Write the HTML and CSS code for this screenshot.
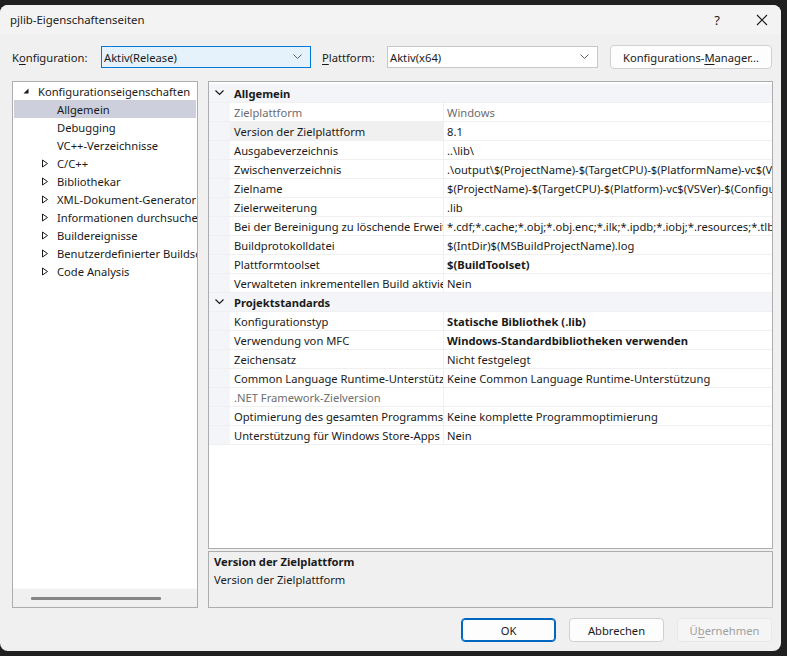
FILE: index.html
```html
<!DOCTYPE html>
<html lang="de">
<head>
  <meta charset="UTF-8">
  <title>pjlib-Eigenschaftenseiten</title>
  <link rel="stylesheet" href="styles.css">
</head>
<body>

<div class="window">
  <div class="titlebar">
    <span class="title">pjlib-Eigenschaftenseiten</span>
    <span class="tb-help">?</span>
    <svg class="tb-close" width="12" height="12" viewBox="0 0 12 12"><path d="M1 1L11 11M11 1L1 11" stroke="#1a1a1a" stroke-width="1.1" fill="none"/></svg>
  </div>

  <div class="content">
    <div class="toolbar">
      <label class="lbl">K<u>o</u>nfiguration:</label>
      <div class="combo active">
        <span>Aktiv(Release)</span>
        <svg width="9" height="6" viewBox="0 0 9 6"><path d="M0.5 0.5L4.5 4.5L8.5 0.5" stroke="#606060" fill="none"/></svg>
      </div>
      <label class="lbl lbl2"><u>P</u>lattform:</label>
      <div class="combo">
        <span>Aktiv(x64)</span>
        <svg width="9" height="6" viewBox="0 0 9 6"><path d="M0.5 0.5L4.5 4.5L8.5 0.5" stroke="#606060" fill="none"/></svg>
      </div>
      <button class="btn mgr">Konfigurations-<u>M</u>anager...</button>
    </div>

    <div class="main">
      <div class="tree">
        <div class="tree-items">
          <div class="node root">
            <svg class="tw" width="8" height="8" viewBox="0 0 8 8"><path d="M6.5 1.5L6.5 6.5L1.5 6.5Z" fill="#1a1a1a"/></svg>
            <span>Konfigurationseigenschaften</span>
          </div>
          <div class="node leaf selected"><span>Allgemein</span></div>
          <div class="node leaf"><span>Debugging</span></div>
          <div class="node leaf"><span>VC++-Verzeichnisse</span></div>
          <div class="node"><svg class="tw" width="8" height="9" viewBox="0 0 8 9"><path d="M1.5 1L6.5 4.5L1.5 8Z" stroke="#1a1a1a" fill="none"/></svg><span>C/C++</span></div>
          <div class="node"><svg class="tw" width="8" height="9" viewBox="0 0 8 9"><path d="M1.5 1L6.5 4.5L1.5 8Z" stroke="#1a1a1a" fill="none"/></svg><span>Bibliothekar</span></div>
          <div class="node"><svg class="tw" width="8" height="9" viewBox="0 0 8 9"><path d="M1.5 1L6.5 4.5L1.5 8Z" stroke="#1a1a1a" fill="none"/></svg><span>XML-Dokument-Generator</span></div>
          <div class="node"><svg class="tw" width="8" height="9" viewBox="0 0 8 9"><path d="M1.5 1L6.5 4.5L1.5 8Z" stroke="#1a1a1a" fill="none"/></svg><span>Informationen durchsuchen</span></div>
          <div class="node"><svg class="tw" width="8" height="9" viewBox="0 0 8 9"><path d="M1.5 1L6.5 4.5L1.5 8Z" stroke="#1a1a1a" fill="none"/></svg><span>Buildereignisse</span></div>
          <div class="node"><svg class="tw" width="8" height="9" viewBox="0 0 8 9"><path d="M1.5 1L6.5 4.5L1.5 8Z" stroke="#1a1a1a" fill="none"/></svg><span>Benutzerdefinierter Buildschritt</span></div>
          <div class="node"><svg class="tw" width="8" height="9" viewBox="0 0 8 9"><path d="M1.5 1L6.5 4.5L1.5 8Z" stroke="#1a1a1a" fill="none"/></svg><span>Code Analysis</span></div>
        </div>
        <div class="hscroll"><div class="thumb"></div></div>
      </div>

      <div class="right">
        <div class="grid">
          <div class="row cat">
            <div class="gut"><svg width="9" height="6" viewBox="0 0 9 6"><path d="M0.5 0.5L4.5 4.5L8.5 0.5" stroke="#1a1a1a" stroke-width="1.2" fill="none"/></svg></div>
            <div class="catname">Allgemein</div>
          </div>
          <div class="row dis"><div class="gut"></div><div class="name">Zielplattform</div><div class="val">Windows</div></div>
          <div class="row sel"><div class="gut"></div><div class="name">Version der Zielplattform</div><div class="val">8.1</div></div>
          <div class="row"><div class="gut"></div><div class="name">Ausgabeverzeichnis</div><div class="val">..\lib\</div></div>
          <div class="row"><div class="gut"></div><div class="name">Zwischenverzeichnis</div><div class="val">.\output\$(ProjectName)-$(TargetCPU)-$(PlatformName)-vc$(VSVer)-$(ConfigurationName)\</div></div>
          <div class="row"><div class="gut"></div><div class="name">Zielname</div><div class="val">$(ProjectName)-$(TargetCPU)-$(Platform)-vc$(VSVer)-$(Configuration)</div></div>
          <div class="row"><div class="gut"></div><div class="name">Zielerweiterung</div><div class="val">.lib</div></div>
          <div class="row"><div class="gut"></div><div class="name">Bei der Bereinigung zu löschende Erweiterungen</div><div class="val">*.cdf;*.cache;*.obj;*.obj.enc;*.ilk;*.ipdb;*.iobj;*.resources;*.tlb;*.tli;*.tlh</div></div>
          <div class="row"><div class="gut"></div><div class="name">Buildprotokolldatei</div><div class="val">$(IntDir)$(MSBuildProjectName).log</div></div>
          <div class="row"><div class="gut"></div><div class="name">Plattformtoolset</div><div class="val b">$(BuildToolset)</div></div>
          <div class="row"><div class="gut"></div><div class="name">Verwalteten inkrementellen Build aktivieren</div><div class="val">Nein</div></div>
          <div class="row cat">
            <div class="gut"><svg width="9" height="6" viewBox="0 0 9 6"><path d="M0.5 0.5L4.5 4.5L8.5 0.5" stroke="#1a1a1a" stroke-width="1.2" fill="none"/></svg></div>
            <div class="catname">Projektstandards</div>
          </div>
          <div class="row"><div class="gut"></div><div class="name">Konfigurationstyp</div><div class="val b">Statische Bibliothek (.lib)</div></div>
          <div class="row"><div class="gut"></div><div class="name">Verwendung von MFC</div><div class="val b">Windows-Standardbibliotheken verwenden</div></div>
          <div class="row"><div class="gut"></div><div class="name">Zeichensatz</div><div class="val">Nicht festgelegt</div></div>
          <div class="row"><div class="gut"></div><div class="name">Common Language Runtime-Unterstützung</div><div class="val">Keine Common Language Runtime-Unterstützung</div></div>
          <div class="row dis"><div class="gut"></div><div class="name">.NET Framework-Zielversion</div><div class="val"></div></div>
          <div class="row"><div class="gut"></div><div class="name">Optimierung des gesamten Programms</div><div class="val">Keine komplette Programmoptimierung</div></div>
          <div class="row"><div class="gut"></div><div class="name">Unterstützung für Windows Store-Apps</div><div class="val">Nein</div></div>
        </div>
        <div class="desc">
          <div class="desc-title">Version der Zielplattform</div>
          <div>Version der Zielplattform</div>
        </div>
      </div>
    </div>

    <div class="buttons">
      <button class="btn default">OK</button>
      <button class="btn">Abbrechen</button>
      <button class="btn disabled">Ü<u>b</u>ernehmen</button>
    </div>
  </div>
</div>

</body>
</html>
```

FILE: styles.css
```css
body { margin: 0; background: #202020; font-family: "Noto Sans", "Open Sans", sans-serif; font-size: 11.2px; color: #1a1a1a; }
u { text-decoration-thickness: 1px; text-underline-offset: 2px; }

.window { margin: 5px 6px 0 0; width: 781px; height: 646px; background: #f0f0f0; border-radius: 8px; overflow: hidden; display: flex; flex-direction: column; }
.titlebar { height: 30px; background: #f3f3f3; display: flex; align-items: center; padding-left: 10px; }
.title { flex: 1; font-size: 11.4px; }
.tb-help { font-size: 13px; margin-right: 36px; }
.tb-close { margin-right: 13px; }

.content { flex: 1; display: flex; flex-direction: column; padding: 11px 8px 9px 12px; }

.toolbar { display: flex; align-items: center; height: 24px; }
.lbl { width: 89px; }
.lbl2 { width: 65px; margin-left: 11px; }
.combo { height: 20px; border: 1px solid #c8c8c8; background: #fff; display: flex; align-items: center; justify-content: space-between; padding: 0 8px 0 2px; box-sizing: content-box; }
.combo.active { width: 198px; background: #e5f1fb; border-color: #0078d7; }
.combo:not(.active) { width: 199px; }
.btn { font-family: inherit; font-size: 11.2px; color: #1a1a1a; background: #fdfdfd; border: 1px solid #d0d0d0; border-radius: 4px; height: 24px; width: 95px; padding: 0; }
.mgr { width: 162px; margin-left: 12px; }

.main { display: flex; gap: 10px; margin-top: 12px; height: 527px; }
.tree { width: 184px; border: 1px solid #adadad; background: #fff; display: flex; flex-direction: column; }
.tree-items { flex: 1; overflow: hidden; }
.node { height: 18px; display: flex; align-items: center; white-space: nowrap; overflow: hidden; padding-left: 28px; }
.node .tw { width: 8px; margin-right: 8px; flex: none; }
.node.root { padding-left: 9px; }
.node.root .tw { margin-right: 8px; }
.node.leaf { padding-left: 44px; }
.node.selected { background: #cdd0dc; margin: 0 1px; padding-left: 43px; }
.hscroll { height: 18px; background: #f0f0f0; border-top: 1px solid #fafafa; display: flex; align-items: center; padding-left: 18px; }
.thumb { width: 130px; height: 3px; background: #858585; border-radius: 1px; }

.right { flex: 1; display: flex; flex-direction: column; gap: 2px; }
.grid { height: 466px; border: 1px solid #adadad; background: #fff; overflow: hidden; padding-top: 2px; box-sizing: border-box; height: 468px; }
.row { display: grid; grid-template-columns: 21px 214px 1fr; height: 19px; box-sizing: border-box; border-bottom: 1px solid #f0f0f0; }
.row > div { display: flex; align-items: center; white-space: nowrap; overflow: hidden; }
.gut { background: #f3f5f8; justify-content: center; }
.name { padding-left: 4px; border-right: 1px solid #f0f0f0; }
.val { padding-left: 3px; }
.b { font-weight: bold; }
.row.dis { color: #6d6d6d; }
.row.sel .name { background: #f0f0f0; }
.row.cat { background: #f3f5f8; grid-template-columns: 21px 1fr; }
.catname { font-weight: bold; padding-left: 4px; }

.desc { flex: 1; border: 1px solid #adadad; background: #f0f0f0; padding: 1px 5px; box-sizing: border-box; line-height: 18px; }
.desc-title { font-weight: bold; }

.buttons { display: flex; justify-content: flex-end; gap: 13px; margin-top: 10px; padding-right: 1px; }
.btn.default { border: 1px solid #0067c0; box-shadow: inset 0 0 0 1px #0067c0; }
.btn.disabled { color: #a0a0a0; background: #f5f5f5; border-color: #e8e8e8; }
```
